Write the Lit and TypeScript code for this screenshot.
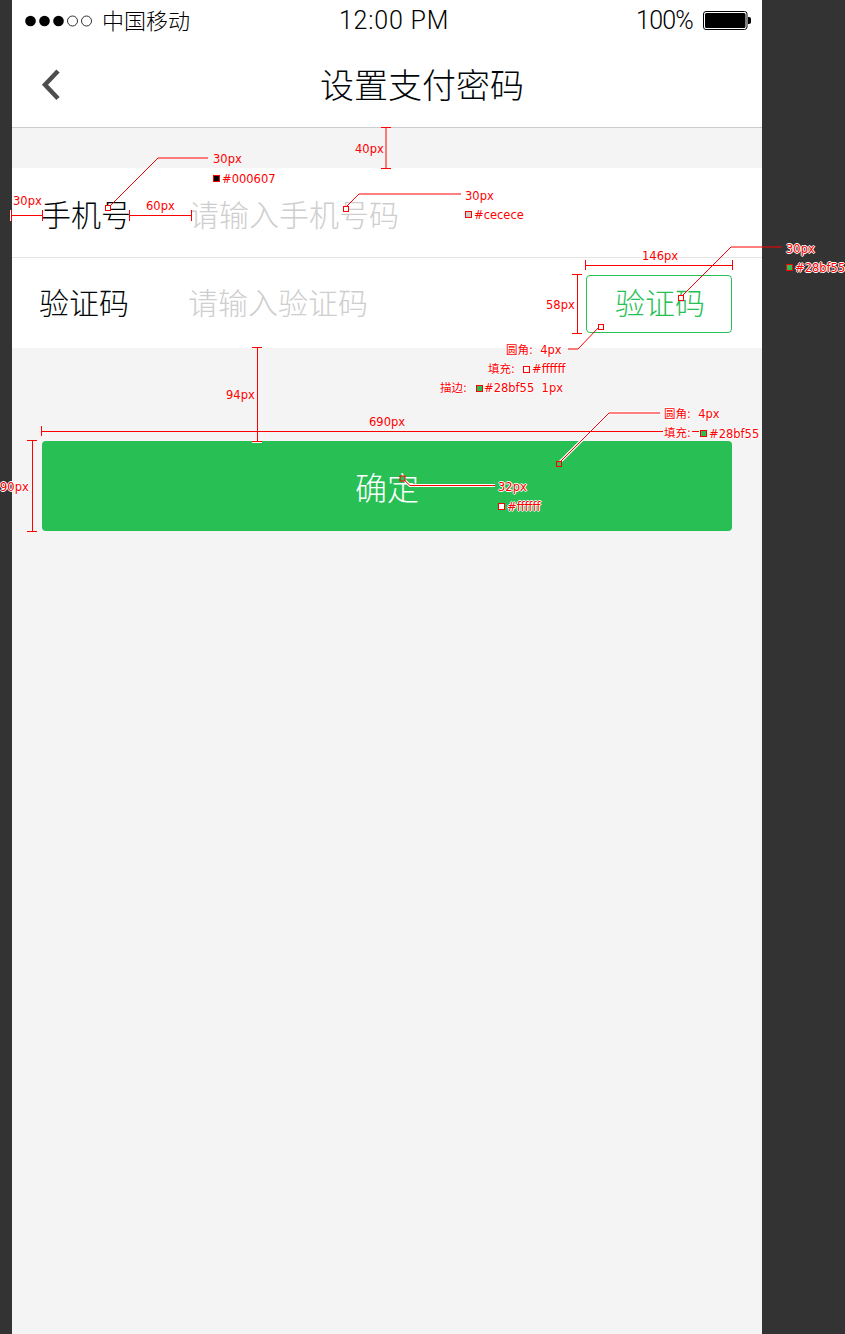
import { LitElement, html, css, svg } from 'lit';
import { customElement } from 'lit/decorators.js';

const RED = '#ff0000';
const GREEN = '#28bf55';

// redline labels: [x, centre y, text, halo?]
const LABELS: [number, number, string, boolean?][] = [
  [213, 159, '30px'],
  [222, 179, '#000607'],
  [355, 149, '40px'],
  [13, 201, '30px', true],
  [146, 206, '60px'],
  [465, 196, '30px'],
  [474, 215, '#cecece'],
  [642, 256, '146px'],
  [546, 305, '58px'],
  [786, 249, '30px', true],
  [795, 268, '#28bf55', true],
  [506, 350, '圆角:  4px', true],
  [488, 369, '填充:', true],
  [532, 369, '#ffffff', true],
  [440, 388, '描边:', true],
  [484, 388, '#28bf55  1px', true],
  [226, 395, '94px'],
  [369, 422, '690px'],
  [664, 414, '圆角:  4px', true],
  [664, 433, '填充:', true],
  [709, 434, '#28bf55', true],
  [0, 487, '90px', true],
  [498, 487, '32px', true],
  [507, 507, '#ffffff', true],
];

// leader lines, straight segments
const LINES = [
  'M108 208 L158 158 H208',
  'M345 208 L359 194 H461',
  'M681 297 L731 247 H782',
  'M600 326 L578 349 H568',
  'M381 127.5 H391 M386 127.5 V168.5 M381 168.5 H391',
  'M11.5 215.5 H42.5 M42.5 210 V221',
  'M129.5 210 V221 M129.5 215.5 H191.5 M191.5 210 V221',
  'M585.5 260 V270 M585.5 265.5 H732.5 M732.5 260 V270',
  'M572 274.5 H582 M577.5 274.5 V333.5 M572 333.5 H582',
  'M252 347.5 H262 M257.5 347.5 V441.5',
  'M41.5 426 V436 M41.5 431.5 H663 M692 431.5 H699',
  'M27 440.5 H37 M32.5 440.5 V531.5 M27 531.5 H37',
];

// lines that sit on the green button or the dark edge get a white edge
const HALO_LINES = [
  'M559 463 L609 413 H660',
  'M402 478 L410 485.5 H495',
  'M252 441.5 H262',
  'M11.5 210 V221',
];

// small marker squares: [x, y, size, fill]
const SWATCHES: [number, number, number, string][] = [
  [105.5, 205.5, 5, '#fff'],
  [343.5, 206.5, 5, '#fff'],
  [678.5, 295.5, 5, '#fff'],
  [598.5, 324.5, 5, '#fff'],
  [556.5, 461.5, 5, '#28bf55'],
  [400, 476, 5, '#28bf55'],
  [213.5, 175.5, 6, '#000'],
  [465.5, 211.5, 6, '#cecece'],
  [786.5, 264.5, 6, GREEN],
  [523.5, 366.5, 6, '#fff'],
  [476.5, 385.5, 6, GREEN],
  [700.5, 430.5, 6, GREEN],
  [498.5, 503.5, 6, '#fff'],
];

@customElement('app-root')
export class AppRoot extends LitElement {
  static styles = css`
    :host {
      display: block;
      position: relative;
      width: 845px;
      height: 1334px;
      overflow: hidden;
      background: #333333;
      font-family: 'Noto Sans CJK SC', sans-serif;
      font-weight: 300;
    }
    .phone {
      display: flex;
      flex-direction: column;
      width: 750px;
      height: 1334px;
      margin-left: 12px;
      background: #f4f4f4;
    }
    .status {
      display: grid;
      grid-template-columns: 1fr auto 1fr;
      align-items: center;
      height: 40px;
      padding: 0 11px 0 13px;
      background: #fff;
      color: #000;
    }
    .carrier {
      display: flex;
      align-items: center;
      gap: 7px;
      font-size: 22px;
      line-height: 36px;
      padding-bottom: 4px;
    }
    .carrier svg {
      margin-top: 4px;
    }
    .time {
      margin-left: 12px;
      font-family: Roboto, sans-serif;
      font-size: 25px;
      letter-spacing: 0.8px;
      line-height: 42px;
    }
    .power {
      display: flex;
      justify-content: flex-end;
      align-items: center;
      gap: 10px;
      font-family: Roboto, sans-serif;
      font-size: 25px;
      letter-spacing: -0.8px;
      line-height: 42px;
    }
    .nav {
      display: flex;
      align-items: center;
      height: 87px;
      padding-left: 28px;
      background: #fff;
      border-bottom: 1px solid #cccccc;
    }
    .nav svg {
      display: block;
      flex: none;
    }
    .title {
      margin-left: 256px;
      font-size: 34px;
      line-height: 87px;
      color: #000607;
    }
    .form {
      margin-top: 40px;
      background: #fff;
    }
    .row {
      display: flex;
      align-items: center;
      height: 89px;
      padding-left: 29px;
      font-size: 30px;
    }
    .row + .row {
      height: 86px;
      padding: 0 0 4px 27px;
      border-top: 1px solid #e5e5e5;
    }
    .label {
      width: 90px;
      color: #000607;
    }
    .hint {
      flex: 1;
      margin-left: 58px;
      color: #cecece;
    }
    .row + .row .hint {
      margin-left: 59px;
    }
    .code {
      box-sizing: border-box;
      width: 146px;
      height: 58px;
      margin: 5px 30px 0 0;
      padding: 0 0 5px 2px;
      border: 1px solid #28bf55;
      border-radius: 4px;
      background: #fff;
      color: #28bf55;
      font: inherit;
      line-height: 1;
      text-align: center;
    }
    .confirm {
      display: block;
      width: 690px;
      height: 90px;
      margin: 93px 0 0 30px;
      border: 0;
      border-radius: 4px;
      background: #28bf55;
      color: #fff;
      font: inherit;
      font-size: 32px;
      line-height: 90px;
      padding: 0;
    }
    .marks {
      position: absolute;
      left: 0;
      top: 0;
      pointer-events: none;
    }
    .note {
      position: absolute;
      font-family: 'DejaVu Sans', 'Noto Sans CJK SC', sans-serif;
      font-weight: 400;
      font-size: 11.5px;
      line-height: 14px;
      color: #ff0000;
      white-space: pre;
    }
    .note.halo {
      text-shadow: 1px 0 0 #fff, -1px 0 0 #fff, 0 1px 0 #fff, 0 -1px 0 #fff;
    }
  `;

  private _dots() {
    return html`<svg width="70" height="12" viewBox="0 0 70 12">
      ${[0, 14, 28].map((x) => svg`<circle cx=${x + 5.5} cy="6" r="5.3" fill="#000"></circle>`)}
      ${[42, 56].map(
        (x) => svg`<circle cx=${x + 5.5} cy="6" r="5" fill="none" stroke="#000" stroke-width="0.8"></circle>`,
      )}
    </svg>`;
  }

  private _battery() {
    return html`<svg width="48" height="20" viewBox="0 0 48 20">
      <rect x="0.5" y="0.5" width="43.5" height="18" rx="2.5" fill="#fff" stroke="#000"></rect>
      <rect x="2" y="2" width="40.5" height="15" rx="1.5" fill="#000"></rect>
      <path d="M45 6 h1 a2 2 0 0 1 2 2 v3 a2 2 0 0 1 -2 2 h-1 z" fill="#000"></path>
    </svg>`;
  }

  private _marks() {
    return html`<svg class="marks" width="845" height="1334" viewBox="0 0 845 1334" fill="none">
      ${HALO_LINES.map((d) => svg`<path d=${d} stroke="#fff" stroke-width="3"></path>`)}
      ${HALO_LINES.map((d) => svg`<path d=${d} stroke=${RED} stroke-width="1"></path>`)}
      ${LINES.map((d) => svg`<path d=${d} stroke=${RED} stroke-width="1"></path>`)}
      ${SWATCHES.map(
        ([x, y, s, fill]) =>
          svg`<rect x=${x} y=${y} width=${s} height=${s} fill=${fill} stroke=${RED}></rect>`,
      )}
    </svg>`;
  }

  render() {
    return html`
      <div class="phone">
        <div class="status">
          <div class="carrier">${this._dots()}<span>中国移动</span></div>
          <div class="time">12:00 PM</div>
          <div class="power"><span>100%</span>${this._battery()}</div>
        </div>
        <div class="nav">
          <svg width="24" height="36" viewBox="0 0 24 36" fill="none">
            <path d="M18 5 L5 18.8 L18 32.5" stroke="#4d4d4d" stroke-width="4.5" stroke-linejoin="miter"></path>
          </svg>
          <div class="title">设置支付密码</div>
        </div>
        <div class="form">
          <div class="row">
            <span class="label">手机号</span>
            <span class="hint">请输入手机号码</span>
          </div>
          <div class="row">
            <span class="label">验证码</span>
            <span class="hint">请输入验证码</span>
            <button class="code">验证码</button>
          </div>
        </div>
        <button class="confirm">确定</button>
      </div>
      ${this._marks()}
      ${LABELS.map(
        ([x, y, text, halo]) =>
          html`<span class="note ${halo ? 'halo' : ''}" style="left:${x}px;top:${y - 7}px">${text}</span>`,
      )}
    `;
  }
}
